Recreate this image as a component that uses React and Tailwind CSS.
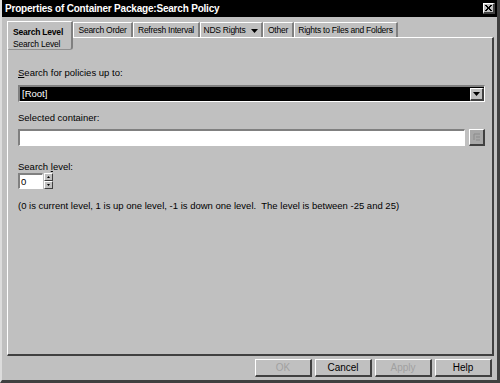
import React from 'react';

const sunken = 'border-t-2 border-l-2 border-b border-r border-t-[#808080] border-l-[#808080] border-b-white border-r-white';
const raised = 'border-t border-l border-b-2 border-r-2 border-t-white border-l-white border-b-[#404040] border-r-[#404040]';

function Tab({ label, width, children }) {
    return (
        <div className={`h-[15px] ${width} shrink-0 flex items-center justify-center pt-[1px] border-t border-l border-r-2 border-t-white border-l-white border-r-[#808080] text-[8.5px] tracking-[-0.25px] text-black whitespace-nowrap`}>
            {label}
            {children}
        </div>
    );
}

function Btn({ label, disabled }) {
    return (
        <div className={`w-[57px] h-[18px] flex items-center justify-center bg-[#c0c0c0] text-[10px] ${raised} ${disabled ? 'text-[#a0a0a0]' : 'text-black'}`}>
            {label}
        </div>
    );
}

export default function App() {
    return (
        <div className="w-[500px] h-[383px] bg-[#c0c0c0] flex flex-col border-l-2 border-l-[#dcdcdc] border-b-[3px] border-b-[#404040] border-r-[3px] border-r-[#404040] overflow-hidden" style={{ fontFamily: '"Liberation Sans", Arial, sans-serif' }}>
            {/* title bar */}
            <div className="h-[17px] bg-black flex items-center justify-between pl-[3px] pr-[2px]">
                <span className="text-white font-bold text-[10px] tracking-[-0.2px]">Properties of Container Package:Search Policy</span>
                <div className={`w-[12px] h-[11px] bg-[#c0c0c0] flex items-center justify-center ${raised}`}>
                    <svg width="7" height="6" viewBox="0 0 7 6"><path d="M0 0L6 6M1 0L7 6M6 0L0 6M7 0L1 6" stroke="#000" strokeWidth="1" /></svg>
                </div>
            </div>

            <div className="flex-1 flex flex-col pl-[5px] pr-[3px] pt-[5px]">
                {/* tabs */}
                <div className="h-[15px] flex items-start">
                    <div className="relative z-10 h-[29px] w-[66px] shrink-0 -mt-[1px] pl-[5px] pt-[4px] bg-[#c0c0c0] border-t border-l border-r-2 border-b border-t-white border-l-white border-r-[#808080] border-b-[#909090] rounded-bl-[3px] rounded-br-[3px] text-[8.5px] tracking-[-0.2px] leading-[12px] whitespace-nowrap">
                        <div className="font-bold">Search Level</div>
                        <div>Search Level</div>
                    </div>
                    <Tab label="Search Order" width="w-[60px]" />
                    <Tab label="Refresh Interval" width="w-[67px]" />
                    <Tab label="NDS Rights" width="w-[63px]">
                        <svg className="ml-[6px]" width="7" height="4" viewBox="0 0 7 4"><path d="M0 0h7L3.5 4z" fill="#000" /></svg>
                    </Tab>
                    <Tab label="Other" width="w-[31px]" />
                    <Tab label="Rights to Files and Folders" width="w-[104px]" />
                </div>

                {/* panel */}
                <div className="w-[487px] h-[319px] border-t border-l border-t-white border-l-white border-r-2 border-b-2 border-r-[#404040] border-b-[#404040] pl-[10px] pt-[28px] text-[9.5px] text-black">
                    <div className="h-[13px] leading-[13px]"><span className="underline">S</span>earch for policies up to:</div>
                    <div className={`mt-[6px] w-[467px] h-[17px] bg-black flex items-center justify-between ${sunken}`}>
                        <span className="text-white pl-[2px] leading-[12px]">[Root]</span>
                        <div className={`w-[14px] h-[13px] bg-[#c0c0c0] flex items-center justify-center ${raised}`}>
                            <svg width="7" height="4" viewBox="0 0 7 4"><path d="M0 0h7L3.5 4z" fill="#000" /></svg>
                        </div>
                    </div>

                    <div className="mt-[9px] h-[13px] leading-[13px]">Selected container:</div>
                    <div className="mt-[5px] flex items-center gap-[4px]">
                        <div className={`w-[447px] h-[17px] bg-white ${sunken}`}></div>
                        <div className={`w-[16px] h-[17px] bg-[#a8a8a8] flex items-center justify-center ${raised}`}>
                            <svg width="8" height="8" viewBox="0 0 8 8"><path d="M1 1h6M1 1v6M3 4h4M3 7h4" stroke="#8c8c8c" strokeWidth="1" fill="none" /></svg>
                        </div>
                    </div>

                    <div className="mt-[14px] h-[13px] leading-[13px]">Search <span className="underline">l</span>evel:</div>
                    <div className="flex items-center gap-[1px]">
                        <div className={`w-[25px] h-[16px] bg-white flex items-center pl-[1px] ${sunken}`}>
                            <span className="leading-[11px]">0</span>
                        </div>
                        <div className="flex flex-col">
                            <div className="w-[9px] h-[8px] bg-[#c0c0c0] flex items-center justify-center border border-t-white border-l-white border-b-[#404040] border-r-[#404040]">
                                <svg width="3" height="2" viewBox="0 0 3 2"><path d="M1.5 0L3 2H0z" fill="#000" /></svg>
                            </div>
                            <div className="w-[9px] h-[8px] bg-[#c0c0c0] flex items-center justify-center border border-t-white border-l-white border-b-[#404040] border-r-[#404040]">
                                <svg width="3" height="2" viewBox="0 0 3 2"><path d="M0 0h3L1.5 2z" fill="#000" /></svg>
                            </div>
                        </div>
                    </div>

                    <div className="mt-[10px] h-[13px] leading-[13px]">(0 is current level, 1 is up one level, -1 is down one level.&nbsp; The level is between -25 and 25)</div>
                </div>

                {/* buttons */}
                <div className="flex justify-end gap-[3px] pr-[2px] pt-[3px]">
                    <Btn label="OK" disabled />
                    <Btn label="Cancel" />
                    <Btn label="Apply" disabled />
                    <Btn label="Help" />
                </div>
            </div>
        </div>
    );
}
